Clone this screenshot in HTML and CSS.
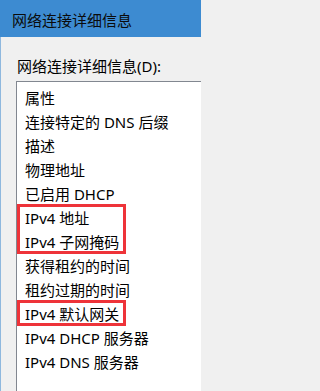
FILE: index.html
```html
<!DOCTYPE html>
<html lang="zh-CN">
<head>
<meta charset="utf-8">
<title>网络连接详细信息</title>
<link rel="stylesheet" href="styles.css">
</head>
<body>
<div class="window">
  <div class="titlebar">网络连接详细信息</div>
  <div class="content">
    <div class="label">网络连接详细信息(D):</div>
    <div class="listbox">
      <div class="row">属性</div>
      <div class="row">连接特定的 DNS 后缀</div>
      <div class="row">描述</div>
      <div class="row">物理地址</div>
      <div class="row">已启用 DHCP</div>
      <div class="mark">
        <div class="row">IPv4 地址</div>
        <div class="row">IPv4 子网掩码</div>
      </div>
      <div class="row">获得租约的时间</div>
      <div class="row">租约过期的时间</div>
      <div class="mark">
        <div class="row">IPv4 默认网关</div>
      </div>
      <div class="row">IPv4 DHCP 服务器</div>
      <div class="row">IPv4 DNS 服务器</div>
    </div>
  </div>
</div>
</body>
</html>
```
FILE: styles.css
```css
html, body {
  margin: 0;
  padding: 0;
  width: 201px;
  height: 391px;
  overflow: hidden;
  background: #f0f0f0;
}

.window {
  font-family: "Noto Sans", "Noto Sans CJK SC", sans-serif;
  font-size: 15px;
  color: #000;
  width: 201px;
  height: 391px;
  display: flex;
  flex-direction: column;
}

.titlebar {
  height: 37px;
  box-sizing: border-box;
  padding: 2px 0 0 12px;
  background: #3d8bd1;
  color: #0b0b0b;
  display: flex;
  align-items: center;
  white-space: nowrap;
}

.content {
  flex: 1;
  border-left: 1px solid #8fb8de;
  background: #f0f0f0;
  padding: 19px 0 0 15px;
  overflow: hidden;
}

.label {
  height: 20px;
  line-height: 20px;
  padding-left: 1px;
  white-space: nowrap;
}

.listbox {
  margin-top: 5px;
  width: 220px;
  height: 340px;
  background: #fff;
  border-top: 1px solid #828790;
  border-left: 1px solid #828790;
  padding: 4px 0 0 8px;
  box-sizing: border-box;
}

.row {
  height: 24px;
  line-height: 24px;
  white-space: nowrap;
}

.mark {
  position: relative;
}

.mark::after {
  content: "";
  position: absolute;
  left: -8px;
  top: -2px;
  bottom: 0;
  width: 109px;
  box-sizing: border-box;
  border: 3px solid #ee3339;
}
```
